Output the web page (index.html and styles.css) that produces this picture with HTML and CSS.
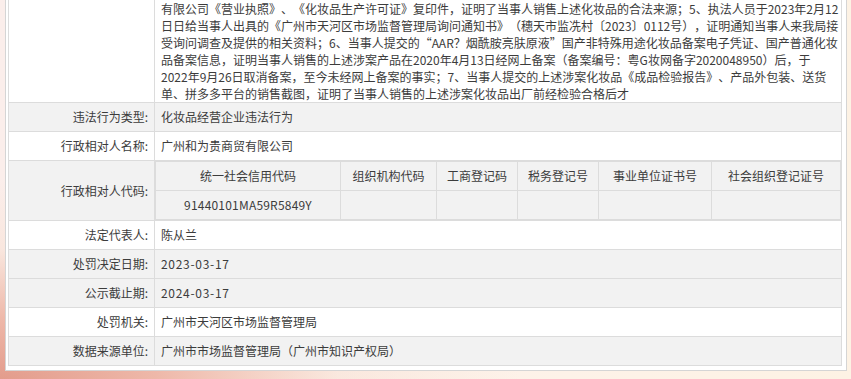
FILE: index.html
```html
<!DOCTYPE html>
<html lang="zh-CN">
<head>
<meta charset="utf-8">
<title>行政处罚信息</title>
<link rel="stylesheet" href="styles.css">
</head>
<body>
<div class="panel">
  <table class="info">
    <tbody>
      <tr class="row-white row-first">
        <td class="label"></td>
        <td class="value text-block">
          <span class="line">有限公司《营业执照》、《化妆品生产许可证》复印件，证明了当事人销售上述化妆品的合法来源；5、执法人员于2023年2月12</span>
          <span class="line">日日给当事人出具的《广州市天河区市场监督管理局询问通知书》（穗天市监冼村〔2023〕0112号），证明通知当事人来我局接</span>
          <span class="line">受询问调查及提供的相关资料；6、当事人提交的“AAR？烟酰胺亮肤原液”国产非特殊用途化妆品备案电子凭证、国产普通化妆</span>
          <span class="line">品备案信息，证明当事人销售的上述涉案产品在2020年4月13日经网上备案（备案编号：粤G妆网备字2020048950）后，于</span>
          <span class="line">2022年9月26日取消备案，至今未经网上备案的事实；7、当事人提交的上述涉案化妆品《成品检验报告》、产品外包装、送货</span>
          <span class="line">单、拼多多平台的销售截图，证明了当事人销售的上述涉案化妆品出厂前经检验合格后才</span>
        </td>
      </tr>
      <tr class="row-grey">
        <td class="label">违法行为类型:</td>
        <td class="value">化妆品经营企业违法行为</td>
      </tr>
      <tr class="row-white">
        <td class="label">行政相对人名称:</td>
        <td class="value">广州和为贵商贸有限公司</td>
      </tr>
      <tr class="row-grey">
        <td class="label">行政相对人代码:</td>
        <td class="value nested">
          <table class="codes">
            <tbody>
              <tr>
                <th class="c1">统一社会信用代码</th>
                <th class="c2">组织机构代码</th>
                <th class="c3">工商登记码</th>
                <th class="c4">税务登记号</th>
                <th class="c5">事业单位证书号</th>
                <th class="c6">社会组织登记证号</th>
              </tr>
              <tr>
                <td class="code">91440101MA59R5849Y</td>
                <td></td>
                <td></td>
                <td></td>
                <td></td>
                <td></td>
              </tr>
            </tbody>
          </table>
        </td>
      </tr>
      <tr class="row-white">
        <td class="label">法定代表人:</td>
        <td class="value">陈从兰</td>
      </tr>
      <tr class="row-grey">
        <td class="label">处罚决定日期:</td>
        <td class="value num">2023-03-17</td>
      </tr>
      <tr class="row-grey">
        <td class="label">公示截止期:</td>
        <td class="value num">2024-03-17</td>
      </tr>
      <tr class="row-white">
        <td class="label">处罚机关:</td>
        <td class="value">广州市天河区市场监督管理局</td>
      </tr>
      <tr class="row-grey">
        <td class="label">数据来源单位:</td>
        <td class="value">广州市市场监督管理局（广州市知识产权局）</td>
      </tr>
    </tbody>
  </table>
</div>
</body>
</html>
```

FILE: styles.css
```css
html {
  height: 100%;
  background-color: #fdf3ea;
  background-image:
    radial-gradient(ellipse 520px 200px at 0% 100%, #e39c8c 0%, #eeb8a9 30%, rgba(248,226,214,0.6) 65%, rgba(253,243,234,0) 100%),
    linear-gradient(to right, #fbeeeb 0%, #fdf2ea 50%, #fdf2e4 100%);
}

body {
  margin: 0;
  height: 379px;
  overflow: hidden;
  font-family: "Noto Sans CJK SC", "Noto Sans", sans-serif;
  font-size: 12px;
  color: #3c3c3c;
  text-spacing-trim: space-all;
}

.panel {
  margin: 0 4px 0 5px;
  padding: 0 4px 4px 2px;
  background: #fff;
  border: 1px solid #d5d5d5;
  border-top: 0;
}

.info {
  width: 100%;
  table-layout: fixed;
  border-collapse: collapse;
}

.info > tbody > tr > td {
  border: 1px solid #dcdcdc;
  height: 28px;
  padding: 0 6px;
  line-height: 28px;
  vertical-align: middle;
}

.info > tbody > tr.row-first > td {
  border-top: 0;
  line-height: 17px;
  padding-top: 0;
  padding-bottom: 0;
  vertical-align: top;
}

.row-grey > td {
  background: #f2f2f2;
}

.row-white > td {
  background: #fff;
}

.label {
  width: 133px;
  text-align: right;
  white-space: nowrap;
}

.line {
  display: block;
  white-space: nowrap;
}

.num {
  letter-spacing: 0.7px;
}

.info > tbody > tr > td.nested {
  padding: 0;
  height: 59px;
}

.codes {
  width: 100%;
  table-layout: fixed;
  border-collapse: collapse;
  border: 1px solid #dcdcdc;
}

.codes th,
.codes td {
  border: 1px solid #dcdcdc;
  background: #f2f2f2;
  font-weight: normal;
  text-align: center;
  height: 28px;
  line-height: 28px;
  padding: 0;
  color: #3c3c3c;
  white-space: nowrap;
}

.codes .code {
  letter-spacing: 0.2px;
}

.codes .c1 { width: 184px; }
.codes .c2 { width: 95px; }
.codes .c3 { width: 80px; }
.codes .c4 { width: 80px; }
.codes .c5 { width: 112px; }
.codes .c6 { width: auto; }
```
